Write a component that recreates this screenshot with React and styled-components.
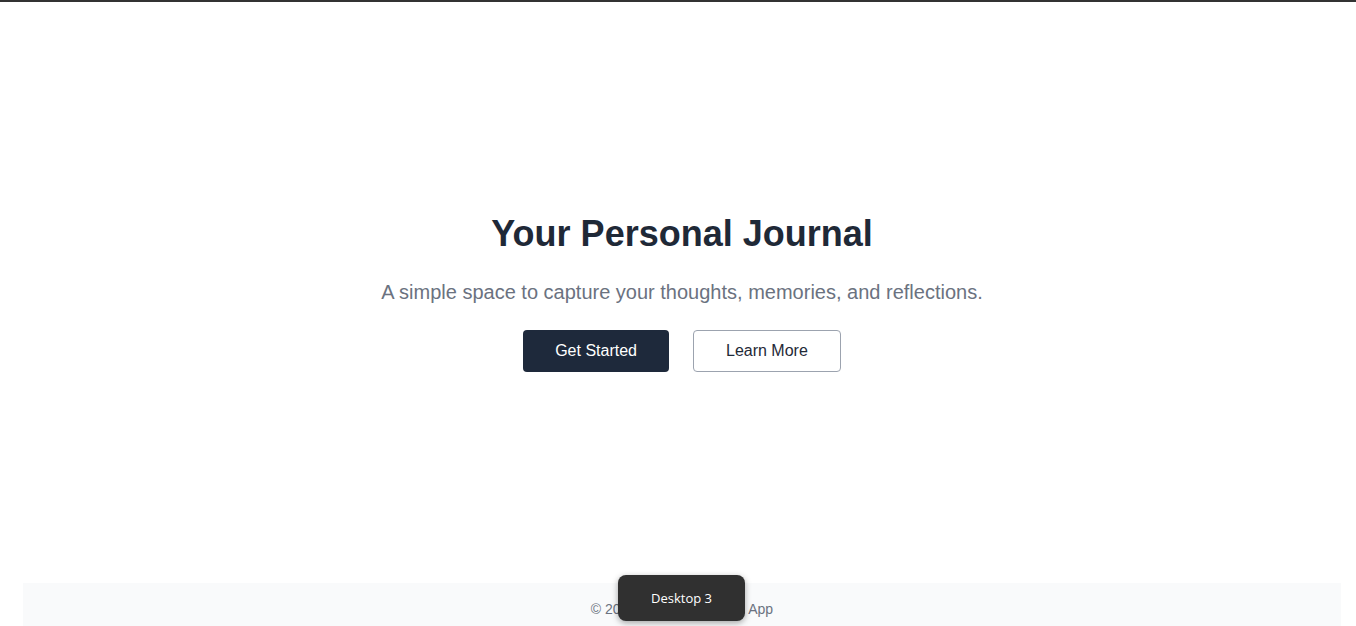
import styled, { createGlobalStyle } from 'styled-components';

const GlobalStyle = createGlobalStyle`
    html, body {
        margin: 0;
        padding: 0;
        background: #ffffff;
        font-family: "Liberation Sans", Arial, sans-serif;
    }
`;

const App = () => {
    return (
        <Page>
            <GlobalStyle />
            <Main>
                <Title>Your Personal Journal</Title>
                <Subtitle>A simple space to capture your thoughts, memories, and reflections.</Subtitle>
                <Actions>
                    <Button primary>Get Started</Button>
                    <Button>Learn More</Button>
                </Actions>
            </Main>
            <Footer>
                <FooterText>© 2024 Personal Journal App</FooterText>
            </Footer>
            <DesktopTip>Desktop 3</DesktopTip>
        </Page>
    );
};

export default App;

const Page = styled.div`
    position: relative;
    height: 626px;
    overflow: hidden;
    border-top: 2px solid #333333;
    box-sizing: border-box;
    padding: 0 15px 0 23px;
    display: flex;
    flex-direction: column;
`;

const Main = styled.main`
    flex-shrink: 0;
    height: 581px;
    display: flex;
    flex-direction: column;
    align-items: center;
    justify-content: center;
`;

const Title = styled.h1`
    margin: 0 0 24px;
    font-size: 36px;
    line-height: 40px;
    font-weight: 700;
    color: #1f2937;
`;

const Subtitle = styled.p`
    margin: 0 0 24px;
    font-size: 20px;
    line-height: 28px;
    color: #6b7280;
`;

const Actions = styled.div`
    display: flex;
    gap: 24px;
`;

const Button = styled.button`
    padding: ${(props) => (props.primary ? '10px 32px' : '9px 32px')};
    font-family: "Liberation Sans", Arial, sans-serif;
    font-size: 16px;
    line-height: 22px;
    border-radius: 4px;
    border: ${(props) => (props.primary ? 'none' : '1px solid #9ca3af')};
    background-color: ${(props) => (props.primary ? '#1e293b' : '#ffffff')};
    color: ${(props) => (props.primary ? '#ffffff' : '#1f2937')};
    cursor: pointer;
`;

const Footer = styled.footer`
    flex-shrink: 0;
    padding: 16px 0;
    background-color: #f9fafb;
    text-align: center;
`;

const FooterText = styled.p`
    margin: 0;
    font-size: 14px;
    line-height: 20px;
    color: #6b7280;
`;

const DesktopTip = styled.div`
    position: absolute;
    left: 618px;
    top: 573px;
    width: 127px;
    height: 46px;
    display: flex;
    align-items: center;
    justify-content: center;
    background-color: #303030;
    border-radius: 8px;
    box-shadow: 0 2px 6px rgba(0, 0, 0, 0.35);
    color: #ffffff;
    font-family: "Open Sans", "Noto Sans", sans-serif;
    font-size: 13px;
`;
